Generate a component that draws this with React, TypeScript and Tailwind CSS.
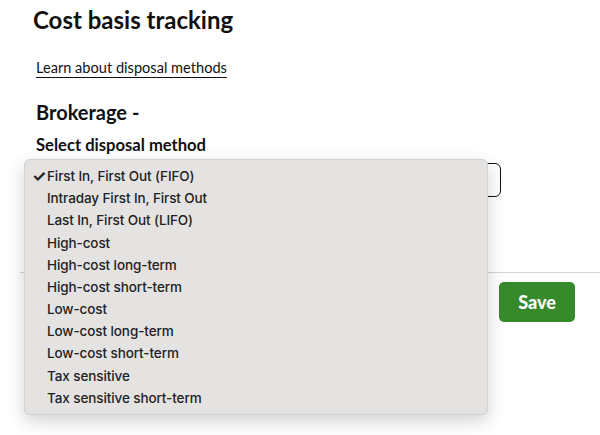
const METHODS = [
  'First In, First Out (FIFO)',
  'Intraday First In, First Out',
  'Last In, First Out (LIFO)',
  'High-cost',
  'High-cost long-term',
  'High-cost short-term',
  'Low-cost',
  'Low-cost long-term',
  'Low-cost short-term',
  'Tax sensitive',
  'Tax sensitive short-term',
]

export default function App() {
  return (
    <div className="relative w-[600px] h-[435px] overflow-hidden bg-white text-[#111] font-['Lato',sans-serif]">
      <div className="pl-[33px] pt-[4px]">
        <h1 className="text-[24px] font-bold leading-[32px]">Cost basis tracking</h1>
        <a className="block mt-[22px] ml-[3px] w-fit text-[14.6px] leading-[20px] underline underline-offset-[4px] decoration-1">
          Learn about disposal methods
        </a>
        <h2 className="mt-[20px] ml-[3px] text-[20px] font-bold leading-[28px]">Brokerage -</h2>
        <p className="mt-[8px] ml-[3px] text-[16.6px] font-bold leading-[22px]">Select disposal method</p>
        <div className="mt-[7px] ml-[3px] w-[465px] h-[34px] rounded-[6px] border-[1.5px] border-[#111]" />
      </div>

      <div className="mt-[75px] ml-[20px] border-t border-[#d4d4d4]" />
      <div className="flex justify-end pr-[25px] pt-[9px]">
        <button className="w-[76px] h-[40px] rounded-[5px] bg-[#378a2b] text-white text-[18px] font-black">
          Save
        </button>
      </div>

      {/* native select menu, open */}
      <div className="absolute left-[24px] top-[159px] w-[464px] rounded-[6px] bg-[#e4e3e2] border border-[#d2d1d0] shadow-[0_6px_18px_rgba(0,0,0,0.18)] pt-[5px] pb-[5px] font-['Inter',sans-serif]">
        {METHODS.map((m, i) => (
          <div key={m} className="relative h-[22.2px] flex items-center pl-[22px] text-[13.5px] font-[450] text-[#222] tracking-[-0.1px]">
            {i === 0 && <span className="absolute left-[7px] text-[16px] font-bold leading-none">✓</span>}
            {m}
          </div>
        ))}
      </div>
    </div>
  )
}
